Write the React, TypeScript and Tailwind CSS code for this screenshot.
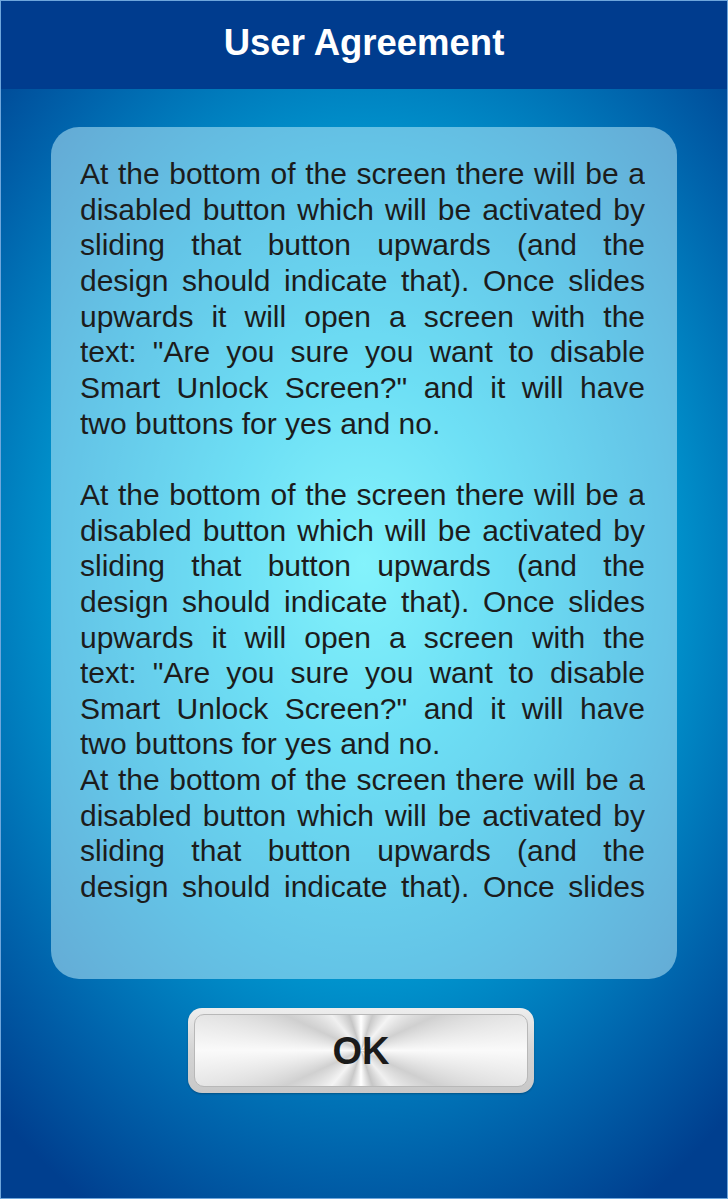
const block = [
  "At the bottom of the screen there will be a",
  "disabled button which will be activated by",
  "sliding that button upwards (and the",
  "design should indicate that). Once slides",
  "upwards it will open a screen with the",
  'text: "Are you sure you want to disable',
  'Smart Unlock Screen?" and it will have',
  "two buttons for yes and no.",
];

function Para({ lines, lastJustified }: { lines: string[]; lastJustified?: boolean }) {
  return (
    <div>
      {lines.map((l, i) => {
        const isLast = i === lines.length - 1 && !lastJustified;
        return (
          <div
            key={i}
            className={isLast ? "whitespace-nowrap" : "whitespace-nowrap text-justify [text-align-last:justify]"}
          >
            {l}
          </div>
        );
      })}
    </div>
  );
}

export default function App() {
  return (
    <main className="w-[728px] h-[1199px] flex flex-col border border-[#6ea6dc] bg-[radial-gradient(ellipse_75%_62%_at_50%_47%,#40f2f8_0%,#14cbea_25%,#0095ce_55%,#0064ac_80%,#003f8f_100%)] font-['Liberation_Sans',Arial,sans-serif]">
      <header className="h-[88px] shrink-0 bg-[#003c8e] flex items-center justify-center">
        <h1 className="text-[36.5px] font-bold text-white leading-none pb-[4px]">User Agreement</h1>
      </header>

      <section className="mx-[50px] mt-[38px] h-[852px] rounded-[28px] bg-[#c8f4ff]/50 pl-[29px] pr-[32px] pt-[29px]">
        <div className="h-[748px] overflow-hidden text-[30px] leading-[35.65px] text-[#1c1c1c]">
          <Para lines={block} />
          <div className="h-[35.65px]" />
          <Para lines={block} />
          <Para lines={block.slice(0, 4)} lastJustified />
        </div>
      </section>

      <div className="flex mt-[29px] pl-[187px]">
        <button className="w-[346px] h-[85px] rounded-[14px] p-[6px] bg-[linear-gradient(180deg,#eeeeee,#d4d4d4_50%,#c8c8c8)] shadow-[0_1px_2px_rgba(0,0,0,0.25)]">
          <div className="w-full h-full rounded-[10px] border border-[#b8b8b8] flex items-center justify-center bg-[conic-gradient(from_0deg_at_50%_50%,#ffffff_0deg,#c9c9c9_18deg,#f4f4f4_40deg,#d0d0d0_65deg,#fafafa_90deg,#cfcfcf_115deg,#f0f0f0_140deg,#c6c6c6_162deg,#ffffff_180deg,#c9c9c9_198deg,#f4f4f4_220deg,#d0d0d0_245deg,#fafafa_270deg,#cfcfcf_295deg,#f0f0f0_320deg,#c6c6c6_342deg,#ffffff_360deg)]">
            <span className="text-[38px] font-bold text-[#1a1a1a] leading-none">OK</span>
          </div>
        </button>
      </div>
    </main>
  );
}
